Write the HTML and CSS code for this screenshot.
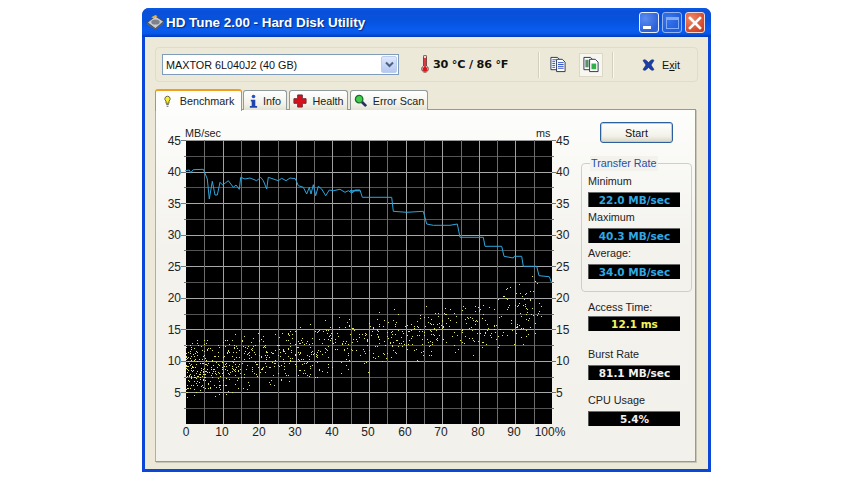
FILE: index.html
```html
<!DOCTYPE html>
<html lang="en">
<head>
<meta charset="utf-8">
<title>HD Tune 2.00 - Hard Disk Utility</title>
<link rel="stylesheet" href="styles.css">
</head>
<body>
<div class="window">
  <header class="titlebar">
    <svg class="app-icon" viewBox="0 0 18 16" width="19" height="17">
      <path d="M1 8 9 2l8 5-8 7z" fill="#c9ccd2" stroke="#4a4f58"/>
      <path d="M1 8v2l8 5 8-6V7l-8 7z" fill="#5b606a"/>
      <ellipse cx="9" cy="7.5" rx="4" ry="2.4" fill="#7d828c"/>
      <path d="M5 3 9 1l2 1-4 2z" fill="#e8b04a"/>
    </svg>
    <h1 class="title">HD Tune 2.00 - Hard Disk Utility</h1>
    <div class="controls">
      <span class="ctl ctl-min"><i class="min-bar"></i></span>
      <span class="ctl ctl-max"><i class="max-box"></i></span>
      <span class="ctl ctl-close">
        <svg viewBox="0 0 14 14" width="14" height="14"><path d="M2 2l10 10M12 2 2 12" stroke="#fff" stroke-width="2.6" stroke-linecap="square"/></svg>
      </span>
    </div>
  </header>

  <main class="client">
    <section class="toolbar">
      <div class="combo">
        <span class="combo-text">MAXTOR 6L040J2 (40 GB)</span>
        <span class="combo-btn">
          <svg viewBox="0 0 9 7" width="9" height="7"><path d="M1 1.5l3.5 3.5L8 1.5" fill="none" stroke="#4d6185" stroke-width="2"/></svg>
        </span>
      </div>
      <svg class="thermo" viewBox="0 0 8 19" width="8" height="19">
        <path d="M2.5 1.5a1.5 1.5 0 0 1 3 0V11a3.3 3.3 0 1 1-3 0z" fill="#f4d8d8" stroke="#5a2020" stroke-width=".8"/>
        <path d="M3.2 3h1.6v9a2.4 2.4 0 1 1-1.6 0z" fill="#d8141c"/>
      </svg>
      <span class="temp">30 °C / 86 °F</span>
      <i class="sep sep-a"></i>
      <span class="tool-btn">
        <svg viewBox="0 0 18 18" width="18" height="17">
          <path d="M1.5 1.5h7l2 2v11h-9z" fill="#fff" stroke="#27334f"/>
          <path d="M7.5 3.500h6l3 3v10h-9z" fill="#fff" stroke="#27334f"/>
          <path d="M3 4h4M3 6h3M3 8h3M3 10h3M3 12h3M9 7h6M9 9h6M9 11h6M9 13h6" stroke="#2f52c8"/>
        </svg>
      </span>
      <span class="tool-btn tool-btn-on">
        <svg viewBox="0 0 18 18" width="18" height="17">
          <path d="M1.5 1.5h7l2 2v11h-9z" fill="#fff" stroke="#27334f"/>
          <path d="M7.5 3.500h6l3 3v10h-9z" fill="#fff" stroke="#27334f"/>
          <rect x="3" y="4" width="3.500" height="8" fill="#5f8f6a"/>
          <rect x="9.500" y="8" width="5" height="6" fill="#2fb04a"/>
        </svg>
      </span>
      <i class="sep sep-b"></i>
      <svg class="exit-icon" viewBox="0 0 15 14" width="15" height="14">
        <path d="M2 2.5c1-1 2-1 3-.2L7.500 4.600 10 2.300c1-.8 2-.8 3 .2l-3 4.500 3 4.500c-1 1-2 1-3 .2L7.500 9.400 5 11.700c-1 .8-2 .8-3-.2L5 7z" fill="#1b3ea8" stroke="#0d2468" stroke-width=".6"/>
      </svg>
      <span class="exit-text">E<u>x</u>it</span>
    </section>

    <nav class="tabs">
      <span class="tab tab-active">
        <svg viewBox="0 0 8 14" width="7" height="13"><path d="M4 1a3 3 0 0 1 1.700 5.500V9H2.300V6.500A3 3 0 0 1 4 1z" fill="#f6ee3a" stroke="#55552a"/><path d="M2.500 10.500h3M3 12.500h2" stroke="#555"/></svg>
        Benchmark
      </span>
      <span class="tab">
        <svg viewBox="0 0 10 15" width="9" height="14"><circle cx="5" cy="2.500" r="2" fill="#2453c4"/><path d="M2 6h5v7h2v2H1v-2h2V8H2z" fill="#1e45ad"/></svg>
        Info
      </span>
      <span class="tab">
        <svg viewBox="0 0 15 15" width="14" height="14"><path d="M5 1h5v4h4v5h-4v4H5v-4H1V5h4z" fill="#d8101c" stroke="#6d2830"/></svg>
        Health
      </span>
      <span class="tab">
        <svg viewBox="0 0 15 15" width="14" height="14"><path d="M8 8l5 5" stroke="#27306a" stroke-width="3"/><circle cx="5.500" cy="5.500" r="4" fill="#3cd04a" stroke="#1f6a2c" stroke-width="1.400"/></svg>
        Error Scan
      </span>
    </nav>

    <section class="panel">
      <svg class="chart" id="chart" viewBox="156 110 420 345" width="420" height="345">
        <rect x="186" y="141" width="366" height="284" fill="#000"/>
        <g id="grid"></g>
        <g id="dots" fill="#e8e85c"></g>
        <polyline id="line" fill="none" stroke="#2ea6dc" stroke-width="1"/>
        <g class="axis-left">
          <text x="181" y="146">45</text><text x="181" y="177">40</text><text x="181" y="209">35</text>
          <text x="181" y="240">30</text><text x="181" y="272">25</text><text x="181" y="303">20</text>
          <text x="181" y="335">15</text><text x="181" y="366">10</text><text x="181" y="398">5</text>
        </g>
        <g class="axis-right">
          <text x="556" y="146">45</text><text x="556" y="177">40</text><text x="556" y="209">35</text>
          <text x="556" y="240">30</text><text x="556" y="272">25</text><text x="556" y="303">20</text>
          <text x="556" y="335">15</text><text x="556" y="366">10</text><text x="556" y="398">5</text>
        </g>
        <g class="axis-bottom">
          <text x="186" y="437">0</text><text x="222" y="437">10</text><text x="259" y="437">20</text>
          <text x="295" y="437">30</text><text x="332" y="437">40</text><text x="368" y="437">50</text>
          <text x="405" y="437">60</text><text x="441" y="437">70</text><text x="478" y="437">80</text>
          <text x="514" y="437">90</text><text x="550" y="437">100%</text>
        </g>
        <text class="unit" x="185" y="138">MB/sec</text>
        <text class="unit" x="536" y="138">ms</text>
      </svg>

      <aside class="side">
        <button class="start" type="button">Start</button>
        <div class="group">
          <div class="group-title">Transfer Rate</div>
          <div class="metric">
            <div class="label">Minimum</div>
            <div class="readout blue">22.0 MB/sec</div>
          </div>
          <div class="metric">
            <div class="label">Maximum</div>
            <div class="readout blue">40.3 MB/sec</div>
          </div>
          <div class="metric">
            <div class="label">Average:</div>
            <div class="readout blue">34.0 MB/sec</div>
          </div>
        </div>
        <div class="metric m-access">
          <div class="label">Access Time:</div>
          <div class="readout yellow">12.1 ms</div>
        </div>
        <div class="metric m-burst">
          <div class="label">Burst Rate</div>
          <div class="readout white">81.1 MB/sec</div>
        </div>
        <div class="metric m-cpu">
          <div class="label">CPU Usage</div>
          <div class="readout white">5.4%</div>
        </div>
      </aside>
    </section>
  </main>
</div>
<script src="chart.js"></script>
</body>
</html>
```
FILE: styles.css
```css
* { box-sizing: border-box; }
html, body { margin: 0; padding: 0; background: #fff; }
body { font-family: "Liberation Sans", Arial, sans-serif; font-size: 10.8px; color: #111; }

.window {
  width: 569px; height: 464px; margin: 8px 0 0 142px;
  display: flex; flex-direction: column;
  background: #0a46d8; border-radius: 7px 7px 0 0;
  padding: 0 3px 3px 3px;
}
.titlebar {
  height: 29px; flex: none; margin: 0 -3px; padding: 0 6px 0 4px;
  display: flex; align-items: center;
  border-radius: 7px 7px 0 0;
  background: linear-gradient(#0a5ae0 0, #0a56e4 4%, #0a4fd8 12%, #0653de 45%, #0a5cf0 75%, #0558e8 88%, #0339b8 100%);
}
.app-icon { flex: none; margin-right: 1px; }
.title {
  margin: 0; flex: 1; font-size: 13.4px; font-weight: 700; color: #fff;
  white-space: nowrap;
  text-shadow: 1px 1px 1px #0a2a80;
}
.controls { display: flex; gap: 3px; }
.ctl {
  width: 20px; height: 21px; border: 1px solid #e8f0ff; border-radius: 3px;
  display: flex; align-items: center; justify-content: center; position: relative;
  background: radial-gradient(circle at 30% 30%, #5c8cf0, #2a5fd8 75%, #3a70e0);
}
.ctl-close { border-color: #f2d8d0; background: radial-gradient(circle at 30% 30%, #ee8a6a, #d6492a 70%, #b83a20); }
.ctl-max { opacity: .62; }
.min-bar { width: 8px; height: 3px; background: #fff; margin: 9px 5px 0 0; }
.max-box { width: 13px; height: 12px; border: 1px solid #cfe0ff; border-top-width: 3px; }

.client {
  flex: 1; min-height: 0; background: #ece9d8;
  padding: 10px 12px 6px 10px;
  display: flex; flex-direction: column;
}
.toolbar {
  height: 35px; flex: none; width: 543px; display: flex; align-items: center;
  border: 1px solid #dfdccb; border-radius: 4px; padding-left: 6px;
}
.combo {
  width: 237px; height: 21px; flex: none; background: #fff; border: 1px solid #7f9db9;
  display: flex; align-items: center; justify-content: space-between; padding: 1px;
}
.combo-text { padding-left: 2px; font-size: 10.8px; }
.combo-btn {
  width: 16px; height: 17px; border: 1px solid #bccdf0; border-radius: 2px;
  background: linear-gradient(#dfe8fb, #b4c8f2);
  display: flex; align-items: center; justify-content: center;
}
.thermo { flex: none; margin-left: 22px; }
.temp { margin-left: 4px; font-family: "DejaVu Sans", sans-serif; font-weight: 700; font-size: 11.2px; width: 105px; white-space: nowrap; letter-spacing: -.2px; }
.sep { flex: none; width: 2px; height: 26px; background: #f8f7f0; border-left: 1px solid #d3d0bf; }
.tool-btn { flex: none; display: flex; align-items: center; justify-content: center; width: 24px; height: 24px; }
.sep-a { margin-right: 6px; }
.tool-btn + .tool-btn { margin-left: 9px; }
.tool-btn-on { background: #f7f6ef; border: 1px solid #dbd8c7; }
.sep-b { margin-left: 9px; }
.exit-icon { flex: none; margin-left: 27px; }
.exit-text { margin-left: 6px; font-size: 10.8px; }

.tabs { display: flex; flex: none; margin-top: 7px; gap: 1px; align-items: flex-end; height: 21px; position: relative; z-index: 1; margin-bottom: -1px; }
.tab {
  height: 20px; display: flex; align-items: center; justify-content: center; gap: 5px;
  padding: 0 3px; background: linear-gradient(#fff, #f2f1e8 70%, #e4e2d4);
  border: 1px solid #919b9c; border-bottom: none; border-radius: 3px 3px 0 0;
  white-space: nowrap; font-size: 10.8px; color: #222;
}
.tab svg { flex: none; }
.tab:nth-child(2) { width: 44px; }
.tab:nth-child(3) { width: 59px; margin-left: 1px; }
.tab:nth-child(4) { width: 78px; margin-left: 1px; }
.tab-active {
  width: 87px; height: 22px; background: #fdfdfb; gap: 9px; padding-left: 4px;
  border-top: 2px solid #f0a020; border-radius: 3px 3px 0 0; margin-bottom: -1px;
}
.panel {
  width: 541px; height: 353px; flex: none; display: flex;
  border: 1px solid #919b9c; border-left-color: #a9b0b0;
  background: linear-gradient(#fdfdfb, #f3f2ed 40%, #f2f1ec);
  box-shadow: 1px 1px 0 #c9c6b5;
}
.chart { flex: none; display: block; margin-top: -1px; }
.chart text { font-family: "Liberation Sans", Arial, sans-serif; font-size: 12px; fill: #222; }
.axis-left text { text-anchor: end; }
.axis-bottom text { text-anchor: middle; }
.chart .unit { font-size: 10.8px; }

.side { width: 115px; margin-left: 5px; display: flex; flex-direction: column; }
.start {
  width: 73px; height: 21px; margin: 12px 0 20px 19px; padding: 0; flex: none;
  font: 10.8px "Liberation Sans", Arial, sans-serif; color: #111;
  border: 1px solid #2d5f9e; border-radius: 3px;
  background: linear-gradient(#fff, #f2f1e8 70%, #d8d5c4);
  box-shadow: inset 0 0 0 1px #b7cdea;
}
.group { width: 111px; height: 129px; flex: none; border: 1px solid #d0d0c2; border-radius: 4px; padding: 0 6px; }
.group-title { width: fit-content; margin: -8px 0 3px 2px; padding: 0 1px; line-height: 15px; height: 15px; color: #1f4fa6; background: #f3f2ed; font-size: 10.8px; }
.group .metric + .metric { margin-top: 3px; }
.label { height: 14px; line-height: 14px; margin-bottom: 4px; font-size: 10.8px; color: #222; }
.readout {
  width: 92px; height: 15px; background: #000;
  border-top: 1px solid #6a6a6a; border-left: 1px solid #555;
  text-align: center; line-height: 14px;
  font-family: "DejaVu Sans", sans-serif; font-weight: 700; font-size: 10.5px;
}
.blue { color: #2fa9e4; }
.yellow { color: #f4f45a; }
.white { color: #f2f2f2; }
.m-access, .m-burst, .m-cpu { margin-left: 7px; }
.m-access { margin-top: 8px; }
.m-access .label { margin-bottom: 2px; }
.m-burst { margin-top: 16px; }
.m-cpu { margin-top: 13px; }
```
FILE: chart.js
```js
(function () {
  var NS = 'http://www.w3.org/2000/svg';
  var grid = document.getElementById('grid');
  var dots = document.getElementById('dots');
  var L = 186, R = 552, T = 141, B = 425;

  function line(x1, y1, x2, y2, c) {
    var l = document.createElementNS(NS, 'line');
    l.setAttribute('x1', x1); l.setAttribute('y1', y1);
    l.setAttribute('x2', x2); l.setAttribute('y2', y2);
    l.setAttribute('stroke', c);
    grid.appendChild(l);
  }
  var i, p;
  for (i = 0; i <= 18; i++) {
    p = Math.round(T + (B - T) * i / 18) + 0.5;
    var major = i % 2 === 0;
    if (i > 0 && i < 18) line(L, p, R, p, major ? '#a8a8a8' : '#545454');
    if (i < 18) line(major ? 181 : 184, p, L, p, '#777');
    if (i < 18) line(R, p, major ? 556 : 554, p, '#777');
  }
  line(L, T + .5, R, T + .5, '#999');
  for (i = 1; i < 20; i++) {
    p = Math.round(L + (R - L) * i / 20) + 0.5;
    line(p, T, p, B, i % 2 === 0 ? '#a0a0a0' : '#6c6c6c');
  }

  var a = [105,140,118,138,122,146,130,137,160,136,172,165,178,225,187,172,195,213,202,213,210,175,218,183,235,170,250,190,258,183,268,196,272,160,285,165,300,162,320,170,332,160,340,170,350,195,355,160,385,170,395,163,408,170,420,162,436,164,445,185,460,190,470,210,478,190,483,210,490,182,497,215,505,187,515,195,527,215,538,198,550,200,570,196,585,205,595,200,605,207,615,200,630,200];
  var b = [0,200,8,203,15,198,30,198,37,220,125,220,130,262,170,265,220,262,230,300,250,304,300,304,322,300,330,340,400,340,405,367,455,367,462,397,490,402,493,397,515,397,520,427,560,427,567,455,598,458,605,477];
  var pts = [];
  for (i = 0; i < a.length; i += 2) pts.push((150 + a[i] / 3).toFixed(1) + ',' + (125 + a[i + 1] / 3).toFixed(1));
  for (i = 0; i < b.length; i += 2) pts.push((350 + b[i] / 3).toFixed(1) + ',' + (125 + b[i + 1] / 3).toFixed(1));
  document.getElementById('line').setAttribute('points', pts.join(' '));

  var seed = 20061;
  function rnd() { seed = (seed * 16807) % 2147483647; return seed / 2147483647; }
  for (i = 0; i < 900; i++) {
    var u = Math.pow(rnd(), 1.55) * 97;
    var low = 3.5 + u * 0.09;
    var high = 13.5 + u * 0.085 + (u > 82 ? (u - 82) * 0.25 : 0);
    var v = low + (high - low) * (rnd() * 0.6 + rnd() * 0.4);
    var d = document.createElementNS(NS, 'rect');
    d.setAttribute('x', Math.round(L + u * 3.66));
    d.setAttribute('y', Math.round(B - v * 6.31));
    d.setAttribute('width', 1);
    d.setAttribute('height', 1);
    dots.appendChild(d);
  }
})();
```
